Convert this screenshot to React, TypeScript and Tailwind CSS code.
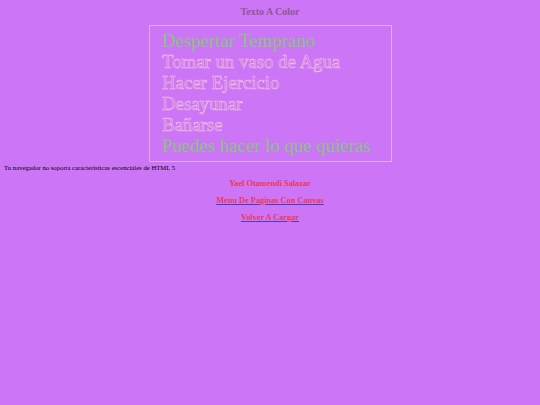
const lines = [
  { text: 'Despertar Temprano', fill: true },
  { text: 'Tomar un vaso de Agua', fill: false },
  { text: 'Hacer Ejercicio', fill: false },
  { text: 'Desayunar', fill: false },
  { text: 'Bañarse', fill: false },
  { text: 'Puedes hacer lo que quieras', fill: true },
];

export default function App() {
  return (
    <div className="min-h-[405px] w-full bg-[#cc75f6] font-['Liberation_Serif',serif]">
      <h1 className="pt-[6px] text-center text-[10px] font-bold leading-[12px] text-[#8a5a90]">Texto A Color</h1>
      <div className="mt-[7px] flex justify-center">
        <div className="h-[137px] w-[243px] border border-[#e2a8ee]">
          <svg width="241" height="135" viewBox="0 0 241 135" style={{ fontFamily: "'Liberation Serif', serif" }}>
            {lines.map((l, i) => (
              <text
                key={l.text}
                x="12"
                y={20.5 + i * 21}
                fontSize="18.8"
                fill={l.fill ? '#86c67e' : 'none'}
                stroke={l.fill ? 'none' : '#f0c2d8'}
                strokeWidth="0.55"
              >
                {l.text}
              </text>
            ))}
          </svg>
        </div>
      </div>
      <p className="mt-[1px] pl-[4px] text-[6.7px] leading-[10px] text-black">
        Tu navegador no soporta caracteristicas escenciales de HTML 5
      </p>
      <div className="mt-[6px] flex flex-col items-center gap-[7px] text-[8.3px] font-bold leading-[10px] text-[#ec3a52]">
        <span>Yael Otamendi Salazar</span>
        <a href="#" className="underline decoration-[#3f3fc8]">Menu De Paginas Con Canvas</a>
        <a href="#" className="underline decoration-[#3f3fc8]">Volver A Cargar</a>
      </div>
    </div>
  );
}
